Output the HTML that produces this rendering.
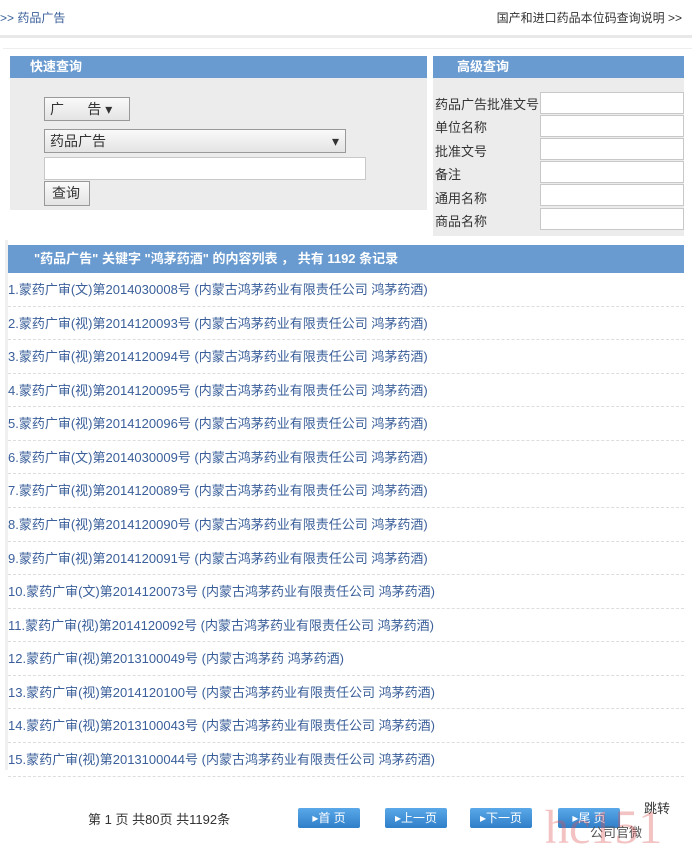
<!DOCTYPE html>
<html><head><meta charset="utf-8"><style>
*{margin:0;padding:0;box-sizing:border-box}
body{width:692px;height:861px;background:#fff;position:relative;overflow:hidden;font-family:"Liberation Sans","Noto Sans CJK SC",sans-serif;font-size:13px;color:#333}
.a{position:absolute}
.link{color:#3a5f9a}
.hd{background:#6a9bd0;color:#fff;font-weight:bold;font-size:13px;line-height:22px}
.inp{background:#fff;border:1px solid #c8c8c8}
.sel{background:linear-gradient(#fafafa,#e4e4e4);border:1px solid #999;font-size:14px;line-height:22px;padding-left:5px}
.row{position:absolute;left:8px;width:676px;height:33.57px;line-height:33px;color:#3a5f9a;font-size:13px;border-bottom:1px dashed #ddd}
.btn{position:absolute;top:808px;height:20px;width:62px;background:linear-gradient(#5aa8e8,#2f7fc9);color:#fff;font-size:12px;line-height:20px;text-align:center;border-radius:2px}
</style></head><body>
<div class="a link" style="left:0;top:9px;font-size:12px">&gt;&gt; 药品广告</div>
<div class="a" style="right:10px;top:9px;font-size:12px;color:#333">国产和进口药品本位码查询说明 &gt;&gt;</div>
<div class="a" style="left:0;top:35px;width:692px;height:3px;background:#e8e8e8"></div>
<div class="a" style="left:3px;top:48px;width:689px;height:1px;background:#eee"></div>

<div class="a hd" style="left:10px;top:56px;width:417px;padding-left:20px">快速查询</div>
<div class="a" style="left:10px;top:78px;width:417px;height:132px;background:#ececec"></div>
<div class="a sel" style="left:44px;top:97px;width:86px;height:24px">广&nbsp;&nbsp;&nbsp;&nbsp;&nbsp;&nbsp;告 ▾</div>
<div class="a sel" style="left:44px;top:129px;width:302px;height:24px">药品广告<span style="position:absolute;right:6px">▾</span></div>
<div class="a inp" style="left:44px;top:157px;width:322px;height:23px"></div>
<div class="a sel" style="left:44px;top:181px;width:46px;height:25px;padding-left:7px">查询</div>

<div class="a hd" style="left:433px;top:56px;width:251px;padding-left:24px">高级查询</div>
<div class="a" style="left:433px;top:78px;width:251px;height:158px;background:#ececec"></div>
<div class="a" style="left:435px;top:93px;line-height:23.4px;font-size:13px;color:#333">药品广告批准文号<br>单位名称<br>批准文号<br>备注<br>通用名称<br>商品名称</div>
<div class="a inp" style="left:540px;top:92px;width:144px;height:22px"></div>
<div class="a inp" style="left:540px;top:115px;width:144px;height:22px"></div>
<div class="a inp" style="left:540px;top:138px;width:144px;height:22px"></div>
<div class="a inp" style="left:540px;top:161px;width:144px;height:22px"></div>
<div class="a inp" style="left:540px;top:184px;width:144px;height:22px"></div>
<div class="a inp" style="left:540px;top:208px;width:144px;height:22px"></div>

<div class="a" style="left:5px;top:240px;width:3px;height:530px;background:#f0f0f0"></div>
<div class="a hd" style="left:8px;top:245px;width:676px;height:28px;line-height:28px;padding-left:26px">"药品广告" 关键字 "鸿茅药酒" 的内容列表 ， 共有 1192 条记录</div>

<div class="row" style="top:273px">1.蒙药广审(文)第2014030008号 (内蒙古鸿茅药业有限责任公司 鸿茅药酒)</div>
<div class="row" style="top:306.6px">2.蒙药广审(视)第2014120093号 (内蒙古鸿茅药业有限责任公司 鸿茅药酒)</div>
<div class="row" style="top:340.1px">3.蒙药广审(视)第2014120094号 (内蒙古鸿茅药业有限责任公司 鸿茅药酒)</div>
<div class="row" style="top:373.7px">4.蒙药广审(视)第2014120095号 (内蒙古鸿茅药业有限责任公司 鸿茅药酒)</div>
<div class="row" style="top:407.3px">5.蒙药广审(视)第2014120096号 (内蒙古鸿茅药业有限责任公司 鸿茅药酒)</div>
<div class="row" style="top:440.9px">6.蒙药广审(文)第2014030009号 (内蒙古鸿茅药业有限责任公司 鸿茅药酒)</div>
<div class="row" style="top:474.4px">7.蒙药广审(视)第2014120089号 (内蒙古鸿茅药业有限责任公司 鸿茅药酒)</div>
<div class="row" style="top:508px">8.蒙药广审(视)第2014120090号 (内蒙古鸿茅药业有限责任公司 鸿茅药酒)</div>
<div class="row" style="top:541.6px">9.蒙药广审(视)第2014120091号 (内蒙古鸿茅药业有限责任公司 鸿茅药酒)</div>
<div class="row" style="top:575.1px">10.蒙药广审(文)第2014120073号 (内蒙古鸿茅药业有限责任公司 鸿茅药酒)</div>
<div class="row" style="top:608.7px">11.蒙药广审(视)第2014120092号 (内蒙古鸿茅药业有限责任公司 鸿茅药酒)</div>
<div class="row" style="top:642.3px">12.蒙药广审(视)第2013100049号 (内蒙古鸿茅药 鸿茅药酒)</div>
<div class="row" style="top:675.8px">13.蒙药广审(视)第2014120100号 (内蒙古鸿茅药业有限责任公司 鸿茅药酒)</div>
<div class="row" style="top:709.4px">14.蒙药广审(视)第2013100043号 (内蒙古鸿茅药业有限责任公司 鸿茅药酒)</div>
<div class="row" style="top:743px">15.蒙药广审(视)第2013100044号 (内蒙古鸿茅药业有限责任公司 鸿茅药酒)</div>

<div class="a" style="left:88px;top:809px;font-size:13px;color:#333">第 1 页 共80页 共1192条</div>
<div class="btn" style="left:298px">▸首 页</div>
<div class="btn" style="left:385px">▸上一页</div>
<div class="btn" style="left:470px">▸下一页</div>
<div class="btn" style="left:558px">▸尾 页</div>
<div class="a" style="left:644px;top:798px;font-size:13px;color:#333">跳转</div>
<div class="a" style="left:590px;top:822px;font-size:13px;color:#555">公司官微</div>
<div class="a" style="left:545px;top:800px;font-family:'Liberation Serif',serif;font-size:48px;color:rgba(220,80,80,0.35)">hc151</div>
</body></html>
